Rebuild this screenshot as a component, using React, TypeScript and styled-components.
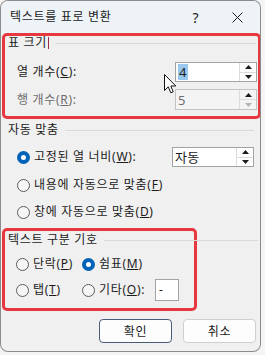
import React from 'react';
import styled, { createGlobalStyle } from 'styled-components';

const GlobalStyle = createGlobalStyle`
  html, body {
    margin: 0;
    padding: 0;
    background: #f4f4f4;
  }
  * {
    box-sizing: border-box;
  }
`;

const FONT = `"Noto Sans", "Noto Sans CJK KR", sans-serif`;

const Window = styled.div`
  position: relative;
  width: 261px;
  height: 352px;
  border: 1px solid rgba(0, 0, 0, 0.42);
  border-radius: 8px;
  overflow: hidden;
  background: #f0f0f0;
  font-family: ${FONT};
  font-size: 12px;
  letter-spacing: 0.7px;
  color: #1b1b1b;
  display: flex;
  flex-direction: column;
`;

const TitleBar = styled.div`
  height: 32px;
  display: flex;
  align-items: center;
  background: #eef3f8;
`;

const Title = styled.div`
  flex: 1;
  padding-left: 9px;
  line-height: 16px;
`;

const CaptionButton = styled.div<{ $width: number }>`
  width: ${p => p.$width}px;
  height: 32px;
  display: flex;
  align-items: center;
  justify-content: center;
  font-size: 14px;
`;

const Body = styled.div`
  flex: 1;
  display: flex;
  flex-direction: column;
  padding: 0 4px 8px 1px;
`;

const Highlight = styled.div<{ $width: number; $height: number }>`
  width: ${p => p.$width}px;
  height: ${p => p.$height}px;
  border: 3px solid #e8383f;
  border-radius: 5px;
  display: flex;
  flex-direction: column;
`;

const LegendRow = styled.div<{ $pad: number; $top?: number; $lineRight?: number }>`
  height: 14px;
  margin-top: ${p => p.$top ?? 0}px;
  padding-left: ${p => p.$pad}px;
  display: flex;
  align-items: center;
  line-height: 14px;
  white-space: nowrap;
  & > i {
    flex: 1;
    height: 1px;
    background: #dadada;
    margin-left: 6px;
    margin-right: ${p => p.$lineRight ?? 0}px;
  }
`;

const Caret = styled.span`
  display: inline-block;
  width: 1px;
  height: 12px;
  margin-left: 1px;
  background: #9a2c48;
`;

const FieldRow = styled.div<{ $top: number; $disabled?: boolean }>`
  display: flex;
  align-items: center;
  margin-top: ${p => p.$top}px;
  padding-left: 12px;
  padding-right: 1px;
  color: ${p => (p.$disabled ? '#6e6e6e' : '#1b1b1b')};
  line-height: 14px;
`;

const SpinBox = styled.div<{ $height: number; $disabled?: boolean }>`
  margin-left: auto;
  width: 82px;
  height: ${p => p.$height}px;
  display: flex;
  border: 1px solid ${p => (p.$disabled ? '#c2c2c2' : '#a3a3a3')};
  background: ${p => (p.$disabled ? '#f4f4f4' : '#ffffff')};
  letter-spacing: 0.4px;
`;

const SpinValue = styled.div<{ $disabled?: boolean }>`
  flex: 1;
  display: flex;
  align-items: center;
  padding-left: 2px;
  font-size: 13px;
  color: ${p => (p.$disabled ? '#6e6e6e' : '#1b1b1b')};
`;

const Selected = styled.span`
  background: #99c8ee;
  padding: 0 1px;
  line-height: 16px;
`;

const SpinButtons = styled.div`
  width: 17px;
  display: flex;
  flex-direction: column;
  border-left: 1px solid #dcdcdc;
`;

const SpinButton = styled.div<{ $dim?: boolean }>`
  flex: 1;
  display: flex;
  align-items: center;
  justify-content: center;
  & + & {
    border-top: 1px solid #dcdcdc;
  }
  svg path {
    fill: ${p => (p.$dim ? '#b4b4b4' : '#1b1b1b')};
  }
`;

const RadioRow = styled.div<{ $top: number; $height?: number }>`
  display: flex;
  align-items: center;
  margin-top: ${p => p.$top}px;
  height: ${p => p.$height ?? 20}px;
  padding-left: 15px;
  padding-right: 2px;
  line-height: 14px;
`;

const RadioGrid = styled.div<{ $top: number }>`
  margin-top: ${p => p.$top}px;
  display: grid;
  grid-template-columns: 66px auto;
  grid-template-rows: 20px 22px;
  row-gap: 5px;
  padding-left: 11px;
  line-height: 14px;
`;

const RadioItem = styled.div`
  display: flex;
  align-items: center;
`;

const Circle = styled.span<{ $on?: boolean }>`
  width: 13px;
  height: 13px;
  flex: none;
  border-radius: 50%;
  margin-right: 4px;
  border: ${p => (p.$on ? '4px solid #0063b8' : '1px solid #5c5c5c')};
  background: ${p => (p.$on ? '#ffffff' : '#f6f6f6')};
`;

const SmallInput = styled.div`
  width: 24px;
  height: 22px;
  margin-left: 10px;
  border: 1px solid #a3a3a3;
  background: #ffffff;
  display: flex;
  align-items: center;
  padding-left: 3px;
`;

const ButtonRow = styled.div`
  display: flex;
  justify-content: flex-end;
  gap: 11px;
  margin-top: 8px;
`;

const Button = styled.div<{ $default?: boolean }>`
  width: 73px;
  height: 24px;
  display: flex;
  align-items: center;
  justify-content: center;
  background: #fdfdfd;
  border: 1px solid ${p => (p.$default ? '#4a5d78' : '#cfcfcf')};
  border-radius: 4px;
`;

const Pointer = styled.svg`
  position: absolute;
  left: 163px;
  top: 73px;
`;

const Key: React.FC<{ k: string }> = ({ k }) => (
  <span>
    (<u>{k}</u>)
  </span>
);

const UpArrow = () => (
  <svg width="7" height="4" viewBox="0 0 7 4">
    <path d="M0 4 L3.5 0 L7 4 Z" />
  </svg>
);

const DownArrow = () => (
  <svg width="7" height="4" viewBox="0 0 7 4">
    <path d="M0 0 L7 0 L3.5 4 Z" />
  </svg>
);

const Spinner: React.FC<{ height: number; disabled?: boolean; children: React.ReactNode }> = ({
  height,
  disabled,
  children,
}) => (
  <SpinBox $height={height} $disabled={disabled}>
    <SpinValue $disabled={disabled}>{children}</SpinValue>
    <SpinButtons>
      <SpinButton>
        <UpArrow />
      </SpinButton>
      <SpinButton $dim={disabled}>
        <DownArrow />
      </SpinButton>
    </SpinButtons>
  </SpinBox>
);

export default function App() {
  return (
    <>
      <GlobalStyle />
      <Window>
        <TitleBar>
          <Title>텍스트를 표로 변환</Title>
          <CaptionButton $width={36}>?</CaptionButton>
          <CaptionButton $width={46}>
            <svg width="11" height="11" viewBox="0 0 11 11">
              <path d="M0.5 0.5 L10.5 10.5 M10.5 0.5 L0.5 10.5" stroke="#1b1b1b" strokeWidth="1" />
            </svg>
          </CaptionButton>
        </TitleBar>

        <Body>
          <Highlight $width={259} $height={86}>
            <LegendRow $pad={3} $lineRight={2}>
              표 크기
              <Caret />
              <i />
            </LegendRow>
            <FieldRow $top={12}>
              열 개수<Key k="C" />:
              <Spinner height={20}>
                <Selected>4</Selected>
              </Spinner>
            </FieldRow>
            <FieldRow $top={7} $disabled>
              행 개수<Key k="R" />:
              <Spinner height={21} disabled>
                5
              </Spinner>
            </FieldRow>
          </Highlight>

          <LegendRow $pad={6} $top={4} $lineRight={2}>
            자동 맞춤
            <i />
          </LegendRow>
          <RadioRow $top={10}>
            <Circle $on />
            고정된 열 너비<Key k="W" />:
            <Spinner height={20}>자동</Spinner>
          </RadioRow>
          <RadioRow $top={8}>
            <Circle />
            내용에 자동으로 맞춤<Key k="F" />
          </RadioRow>
          <RadioRow $top={7}>
            <Circle />
            창에 자동으로 맞춤<Key k="D" />
          </RadioRow>

          <Highlight $width={195} $height={83} style={{ marginTop: 6 }}>
            <LegendRow $pad={3} $top={2} $lineRight={-64}>
              텍스트 구분 기호
              <i />
            </LegendRow>
            <RadioGrid $top={7}>
              <RadioItem>
                <Circle />
                단락<Key k="P" />
              </RadioItem>
              <RadioItem>
                <Circle $on />
                쉼표<Key k="M" />
              </RadioItem>
              <RadioItem>
                <Circle />
                탭<Key k="T" />
              </RadioItem>
              <RadioItem>
                <Circle />
                기타<Key k="O" />:
                <SmallInput>-</SmallInput>
              </RadioItem>
            </RadioGrid>
          </Highlight>

          <ButtonRow>
            <Button $default>확인</Button>
            <Button>취소</Button>
          </ButtonRow>
        </Body>

        <Pointer width="13" height="20" viewBox="0 0 13 20">
          <path
            d="M0.5 0.5 L0.5 16.5 L4.3 12.8 L6.8 18.8 L9.2 17.8 L6.8 12 L11.8 12 Z"
            fill="#ffffff"
            stroke="#111111"
            strokeWidth="1"
            strokeLinejoin="round"
          />
        </Pointer>
      </Window>
    </>
  );
}
